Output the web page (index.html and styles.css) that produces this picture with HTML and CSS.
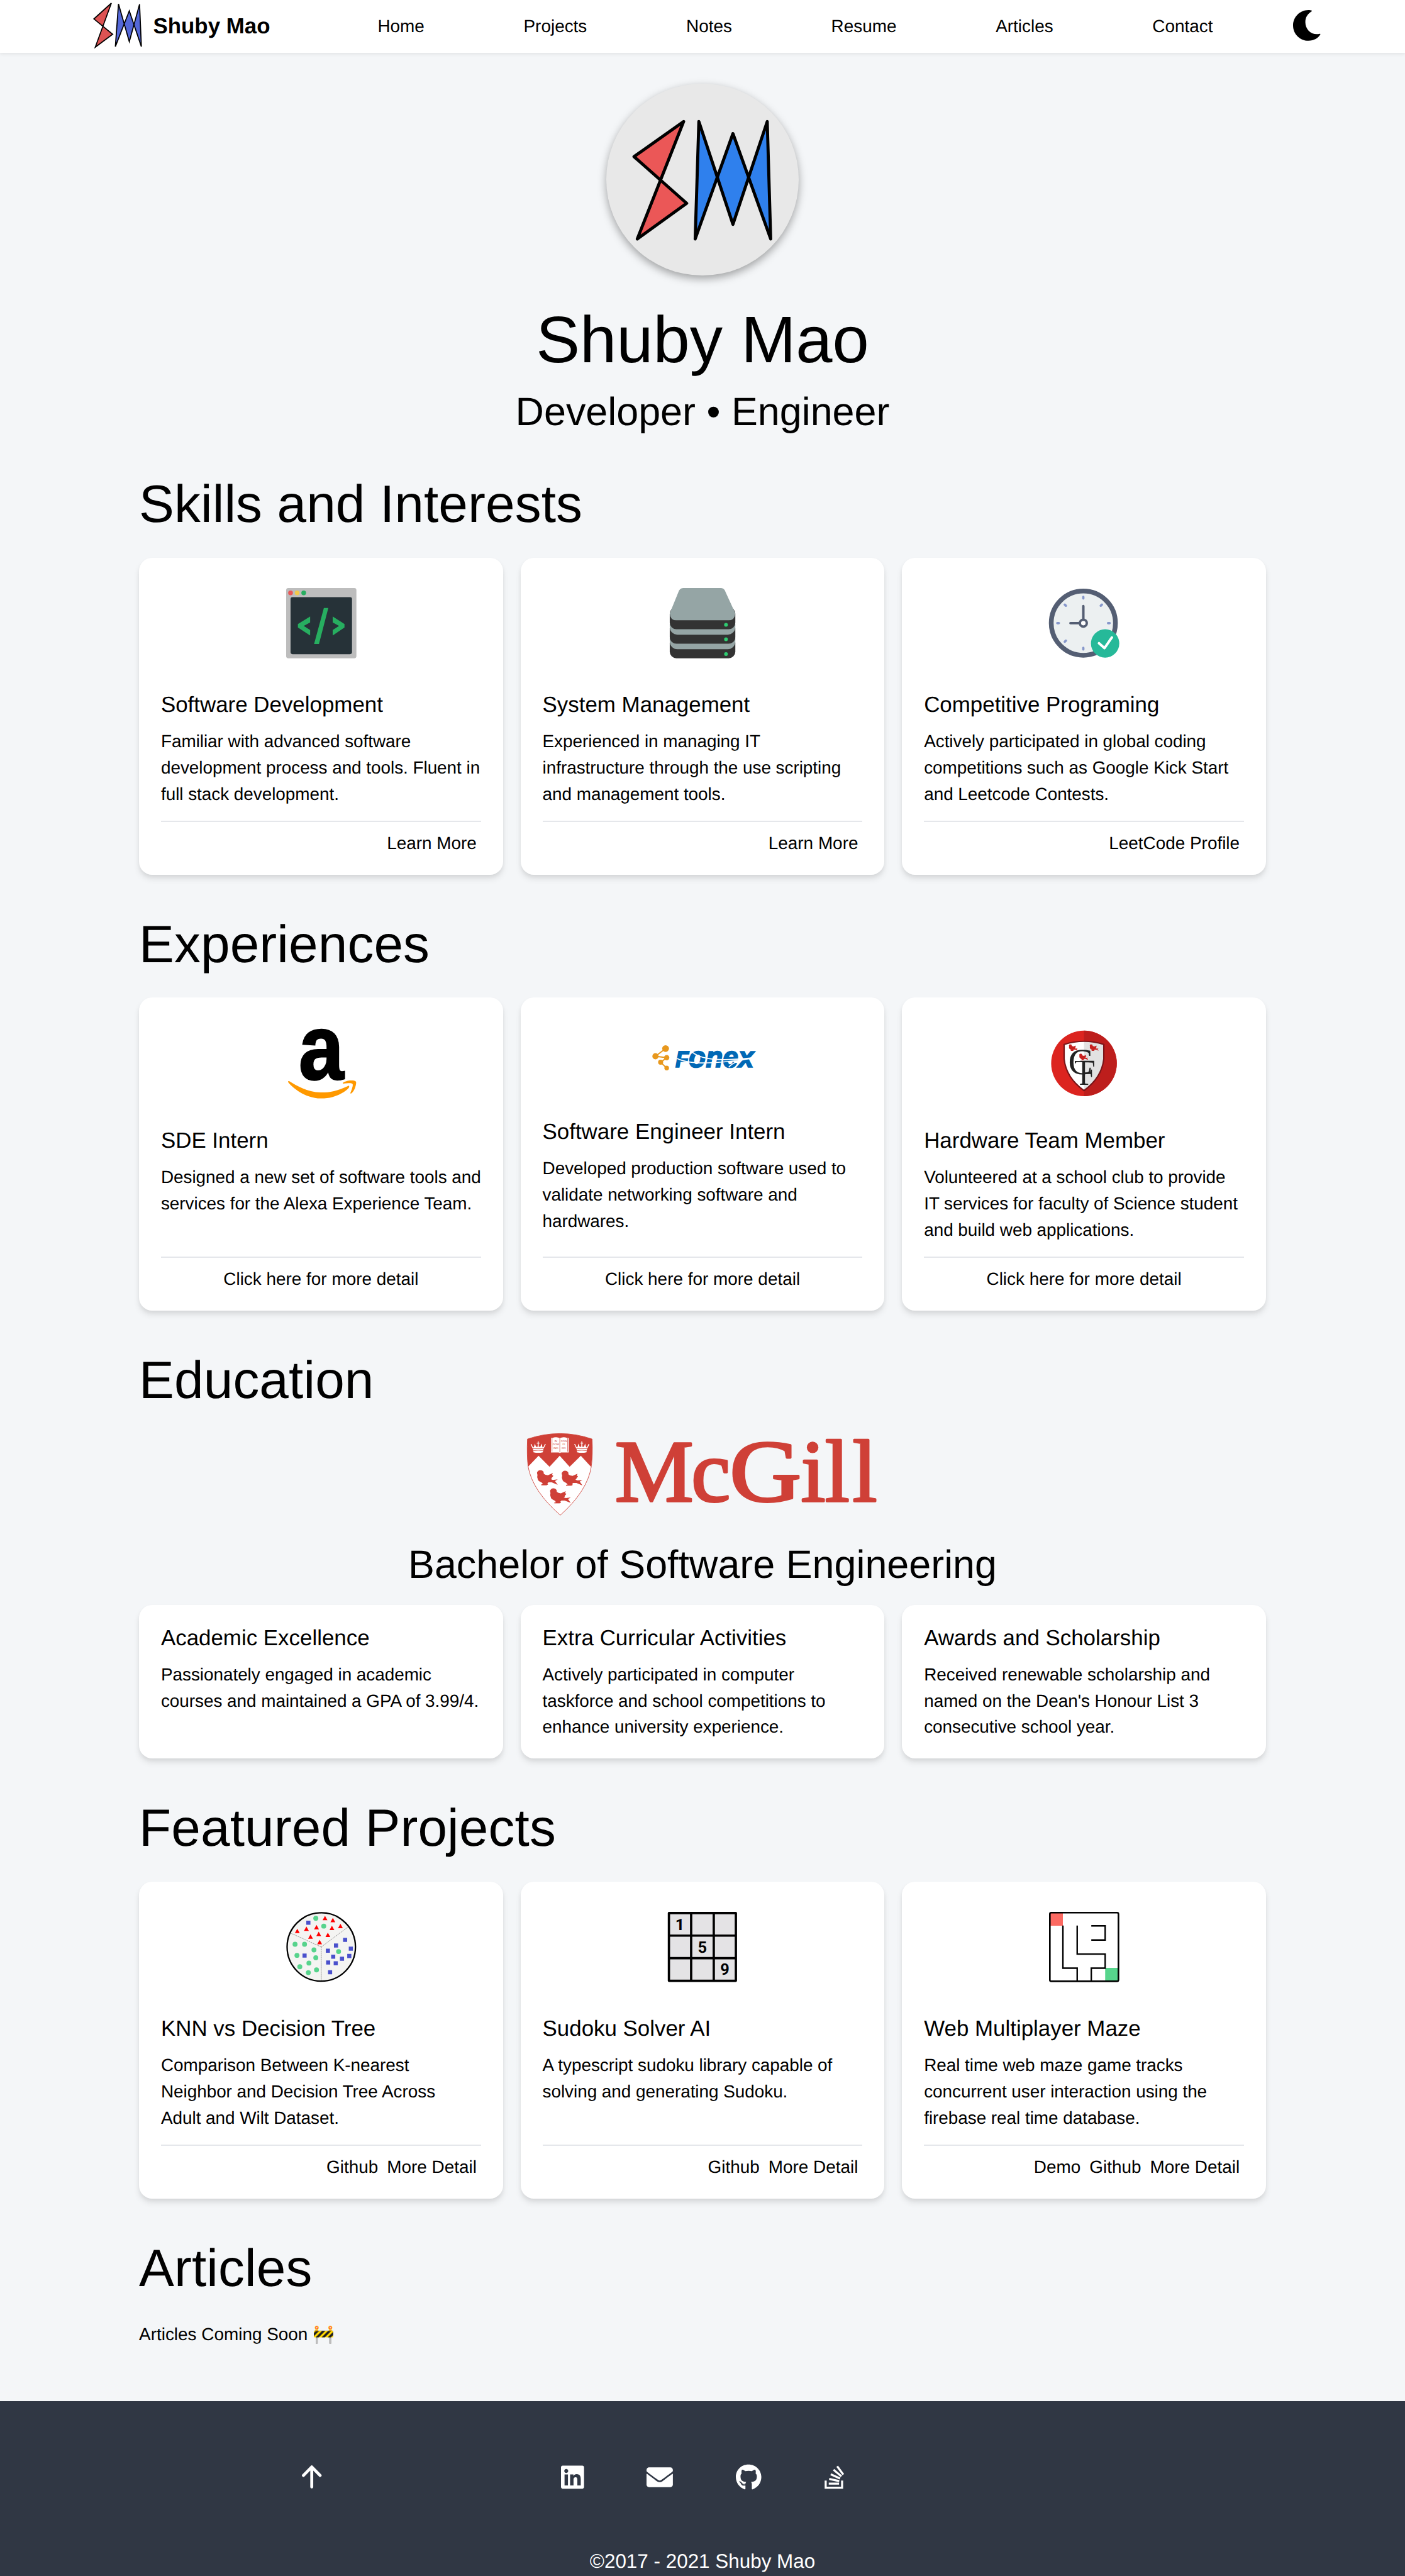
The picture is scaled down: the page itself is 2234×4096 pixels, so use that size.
FILE: index.html
```html
<!DOCTYPE html>
<html lang="en">
<head>
<meta charset="utf-8">
<title>Shuby Mao</title>
<link rel="stylesheet" href="styles.css">
</head>
<body>
<svg class="defs" aria-hidden="true">
  <symbol id="bird" viewBox="0 0 38 28"><path d="M1 3Q3 0 6 0Q10 0 12 3L12.600 7Q15 9 20 9.500L29 5.500L27.600 9L30 10.500L27 14L27 15.500L25 16.500L29 18L38 17L33 20L38 27L27 22.500L21 22.500L19 24.500L20.500 26L17.500 27.700H8L8 26L11 25.500L9 23Q3 20 2 18L0.500 13L1 9L0 5Z"/></symbol>
  <symbol id="crown" viewBox="0 0 28 21"><path d="M0 5L2 5L4 10L6 11L8 4L10 10L13 10L13.200 4L11.500 4V2.500H13.200V0H14.800V2.500H16.500V4H14.800L15 10L18 10L20 4L22 11L24 10L26 5L28 5L24 13H4Z"/><path d="M4.500 14H23.500L22.500 20Q14 22 5.500 20Z"/><path class="crown-line" d="M5 17Q14 15.500 23 17"/></symbol>
</svg>

<header class="navbar">
  <a class="brand">
    <svg class="brand-mark" viewBox="0 0 90 84"><path class="mark-red" d="M33.300 2.300L1.500 31L35.700 59L4 82.500Z"/><path class="mark-blue" d="M46.300 3.700L66 72.600L84.700 4.300L88 81.500L66 16.300L40.600 81.500Z"/></svg>
    <span>Shuby Mao</span>
  </a>
  <nav class="nav-links"><a>Home</a><a>Projects</a><a>Notes</a><a>Resume</a><a>Articles</a><a>Contact</a></nav>
  <svg class="moon" viewBox="0 0 50 56"><path d="M34 .8C33 .3 30 0 28 0C12.500 0 0 12.500 0 28S12.500 56 28 56C38 56 46 51 49.700 44.500C50.300 43.300 49 43 47.500 43.500C34 46 22.400 36 22.400 22C22.400 13 27 7 33 3C34.200 2.200 34.800 1.300 34 .8Z"/></svg>
</header>

<main>
  <section class="hero">
    <div class="avatar">
      <svg viewBox="0 0 350 350"><path class="avatar-red" d="M141 69L50.500 133L146.500 218L56.500 283Z"/><path class="avatar-blue" d="M168.700 69L230.800 256.500L293.300 69L299.600 283L230.800 91L162 283Z"/></svg>
    </div>
    <h1>Shuby Mao</h1>
    <p class="tagline">Developer • Engineer</p>
  </section>

  <section class="section">
    <h2>Skills and Interests</h2>
    <div class="cards cards-skills">
      <article class="card">
        <svg class="icon" viewBox="0 0 128 128"><rect width="128" height="128" rx="4" fill="#bdbdbd"/><circle cx="8" cy="9" r="4.300" fill="#eb5757"/><circle cx="20" cy="9" r="4.300" fill="#f2c94c"/><circle cx="32" cy="9" r="4.300" fill="#27ae60"/><rect x="8" y="16.500" width="112" height="104" rx="3.500" fill="#263238"/><path fill="#27ae60" d="M43.700 52L21.400 65.700V72L43.700 86.500V76.600L32 69L43.700 62.700ZM84.800 52L106.300 65.700V72L84.800 86.500V76.600L96.400 69L84.800 62.700ZM68.700 36.500H76.800L59.800 102H50.900Z"/></svg>
        <h3>Software Development</h3>
        <p>Familiar with advanced software<br>development process and tools. Fluent in<br>full stack development.</p>
        <div class="links"><a>Learn More</a></div>
      </article>
      <article class="card">
        <svg class="icon" viewBox="0 0 128 128"><g fill="#333"><rect x="4.500" y="88" width="119.500" height="40" rx="12"/></g><rect x="4.500" y="78" width="119.500" height="33.400" rx="14" fill="#95a5a5"/><rect x="4.500" y="62" width="119.500" height="39.500" rx="12" fill="#333"/><rect x="4.500" y="52" width="119.500" height="33" rx="14" fill="#95a5a5"/><rect x="4.500" y="35" width="119.500" height="40" rx="12" fill="#333"/><path fill="#95a5a5" d="M29 0H98Q104 0 106.500 8L124 46Q123 58.700 112 58.700H16Q5.500 58.700 4.500 46L20 8Q22.500 0 29 0Z"/><g fill="#2ecc71"><circle cx="107" cy="67" r="3.400"/><circle cx="107" cy="93.500" r="3.400"/><circle cx="107" cy="120.300" r="3.400"/></g></svg>
        <h3>System Management</h3>
        <p>Experienced in managing IT<br>infrastructure through the use scripting<br>and management tools.</p>
        <div class="links"><a>Learn More</a></div>
      </article>
      <article class="card">
        <svg class="icon" viewBox="0 0 128 128"><circle cx="62.500" cy="64" r="58.500" fill="#ecf0f1" stroke="#545e73" stroke-width="8.600"/><path d="M62.500 16V19M62.500 109V112M15 64H18M107.500 64H110.500M28.700 30.200L30.700 32.200M96.300 30.200L94.300 32.200M28.700 97.800L30.700 95.800" stroke="#8697cb" stroke-width="4.200" stroke-linecap="round"/><path d="M62.500 33V56M39 64H55" stroke="#545e73" stroke-width="4.500" stroke-linecap="round"/><circle cx="62.500" cy="64" r="6.300" fill="#fff" stroke="#545e73" stroke-width="4.400"/><circle cx="102.200" cy="101" r="25.800" fill="#26b999"/><path d="M91 100.500L101 109.500L114.500 90" fill="none" stroke="#fff" stroke-width="4.500" stroke-linecap="round" stroke-linejoin="round"/></svg>
        <h3>Competitive Programing</h3>
        <p>Actively participated in global coding<br>competitions such as Google Kick Start<br>and Leetcode Contests.</p>
        <div class="links"><a>LeetCode Profile</a></div>
      </article>
    </div>
  </section>

  <section class="section">
    <h2>Experiences</h2>
    <div class="cards cards-jobs">
      <article class="card">
        <svg class="icon" viewBox="0 0 128 128"><text class="amazon-a" transform="translate(23 92.500) scale(.88 1)">a</text><path fill="#f90" transform="translate(1.500 -9.300) scale(.2858)" d="M393.200 413c-7.700 10-70 67-174.500 67S34.200 408.500 9.700 379c-6.800-7.700 1-11.300 5.500-8.300C88.500 415.200 203 488.500 387.700 401c7.500-3.700 13.300 2 5.500 12zm39.800 2.200c-6.500 15.800-16 26.800-21.200 31-5.500 4.500-9.500 2.700-6.500-3.800s19.300-46.500 12.700-55c-6.500-8.300-37-4.300-48-3.200-10.800 1-13 2-14-.3-2.300-5.700 21.700-15.500 37.500-17.500 15.700-1.800 41-.8 46 5.700 3.700 5.100 0 27.100-6.500 43.100z"/></svg>
        <h3>SDE Intern</h3>
        <p>Designed a new set of software tools and<br>services for the Alexa Experience Team.</p>
        <div class="links links-center"><a>Click here for more detail</a></div>
      </article>
      <article class="card">
        <svg class="icon icon-wide" viewBox="0 0 192 112"><g fill="#e8981d"><circle cx="29" cy="37" r="6.200"/><circle cx="10.500" cy="51" r="5.600"/><circle cx="31" cy="53.600" r="4.800"/><circle cx="20" cy="62" r="4.600"/><circle cx="31" cy="72.500" r="4.200"/></g><path d="M29 37L10.500 51L31 53.600L20 62L31 72.500" fill="none" stroke="#e8981d" stroke-width="2.300"/><text class="fonex" x="47" y="70.500" textLength="143" lengthAdjust="spacingAndGlyphs"><tspan class="fonex-f">F</tspan>onex</text><path d="M50 55C72 66 110 66 186 55M76 42C92 58 130 60 186 54M144 71C152 62 164 58 184 55" fill="none" stroke="#fff" stroke-width="1.900"/></svg>
        <h3>Software Engineer Intern</h3>
        <p>Developed production software used to<br>validate networking software and<br>hardwares.</p>
        <div class="links links-center"><a>Click here for more detail</a></div>
      </article>
      <article class="card">
        <svg class="icon" viewBox="0 0 128 128"><circle cx="63.700" cy="64" r="59.800" fill="#dc241f"/><path d="M63.700 4.200A59.800 59.800 0 0 1 63.700 123.800Z" fill="#bd1e1c"/><path d="M27.500 29.500Q63.700 18 99.800 29.500V56Q96 90 63.700 113.500Q31 90 27.500 56Z" fill="#fff"/><path d="M63.700 24V113.500Q96 90 99.800 56V29.500Q84 24 63.700 24Z" fill="#e2e2e2"/><path d="M27.500 29.500Q63.700 18 99.800 29.500V56Q96 90 63.700 113.500Q31 90 27.500 56Z" fill="none" stroke="#7a1518" stroke-width="2.500"/><g class="crest-text"><text transform="translate(35 84)">C</text><text transform="translate(54.500 103.700) scale(.8 1)">F</text></g><path d="M47 59.700H60V61.500H50L47 65Z" fill="#222"/><g fill="#c8201e"><use href="#bird" x="36" y="29" width="16.500" height="12.500"/><use href="#bird" x="74" y="29" width="16.500" height="12.500"/><use href="#bird" x="55" y="46" width="16.500" height="12.500"/></g></svg>
        <h3>Hardware Team Member</h3>
        <p>Volunteered at a school club to provide<br>IT services for faculty of Science student<br>and build web applications.</p>
        <div class="links links-center"><a>Click here for more detail</a></div>
      </article>
    </div>
  </section>

  <section class="section">
    <h2>Education</h2>
    <svg class="school" viewBox="0 0 640 150">
      <path d="M.8 10.500Q30 .5 60 .5T118.500 10.500Q120 40 117 61Q110 105 60.600 149.300Q10 105 2 61Q-.5 40 .8 10.500Z" fill="#fff" stroke="#cf4037"/>
      <path d="M.8 10.500Q30 .5 60 .5T118.500 10.500Q120 40 116.500 61L98 41L77.600 61L59.500 41L41 61L21 41L1.800 61Q-.5 40 .8 10.500Z" fill="#cf4037"/>
      <g fill="#cf4037"><use href="#bird" x="18" y="67" width="38" height="28"/><use href="#bird" x="63" y="68" width="38" height="28"/><use href="#bird" x="41.700" y="100" width="38" height="28"/></g>
      <g fill="#fff"><use href="#crown" x="6.300" y="14.700" width="28" height="21"/><use href="#crown" x="85.800" y="14.700" width="28" height="21"/><path d="M43.600 8.500H46Q54 5.500 59.700 9Q66 5.500 73 8.500H76V35H62L59.700 36L57.500 35H43.600Z"/></g>
      <path d="M45.500 9V33.500M74 9V33.500M59.700 9V35" stroke="#cf4037" stroke-width=".8"/>
      <g class="motto"><text x="52.500" y="15.500">IN</text><text x="52.500" y="22">DOM</text><text x="52.500" y="28.500">INO</text><text x="67" y="15.500">CON</text><text x="67" y="22">FI</text><text x="67" y="28.500">DO</text></g>
      <text class="school-name" y="124"><tspan x="160 299">Mc</tspan><tspan x="369" textLength="131" lengthAdjust="spacingAndGlyphs">G</tspan><tspan x="499 543 593">ill</tspan></text>
    </svg>
    <p class="degree">Bachelor of Software Engineering</p>
    <div class="cards cards-plain">
      <article class="card">
        <h3>Academic Excellence</h3>
        <p>Passionately engaged in academic<br>courses and maintained a GPA of 3.99/4.</p>
      </article>
      <article class="card">
        <h3>Extra Curricular Activities</h3>
        <p>Actively participated in computer<br>taskforce and school competitions to<br>enhance university experience.</p>
      </article>
      <article class="card">
        <h3>Awards and Scholarship</h3>
        <p>Received renewable scholarship and<br>named on the Dean's Honour List 3<br>consecutive school year.</p>
      </article>
    </div>
  </section>

  <section class="section">
    <h2>Featured Projects</h2>
    <div class="cards cards-skills">
      <article class="card">
        <svg class="icon" viewBox="0 0 128 128"><circle cx="64" cy="64" r="62.300" fill="#f4f4f2" stroke="#000" stroke-width="2.600"/><path d="M64 64V125M64 64L9 39M64 64L112 28" stroke="#666" stroke-width=".8" stroke-dasharray="2.500 1.200"/>
          <g fill="#57d38c"><circle cx="54" cy="11.700" r="4.500"/><circle cx="68.500" cy="26" r="4.500"/><circle cx="16.200" cy="59" r="4.500"/><circle cx="33.500" cy="59" r="4.500"/><circle cx="50.700" cy="69.300" r="4.500"/><circle cx="19.700" cy="79.300" r="4.500"/><circle cx="54" cy="83.700" r="4.500"/><circle cx="41.500" cy="93.300" r="4.500"/><circle cx="24.900" cy="100" r="4.500"/><circle cx="55.300" cy="105.700" r="4.500"/><circle cx="40.400" cy="110.700" r="4.500"/><circle cx="95.500" cy="72.300" r="4.500"/></g>
          <path fill="#4a50cc" d="M36.700 16h7.500v7.500h-7.500zM103.700 47.300h7.500v7.500h-7.500zM87.100 57.600h7.500v7.500h-7.500zM72.300 67h7.500v7.500h-7.500zM114.100 63.300h7.500v7.500h-7.500zM111.300 76.600h7.500v7.500h-7.500zM82 78h7.500v7.500h-7.500zM98 81.600h7.500v7.500h-7.500zM72.800 88.600h7.500v7.500h-7.500zM86.600 90h7.500v7.500h-7.500zM76.300 106.300h7.500v7.500h-7.500zM29.800 76h7.500v7.500h-7.500z"/>
          <path fill="#f00" d="M70.800 7.300l4.400 8h-8.800zM85.100 11l4.400 8h-8.800zM98.900 21.700l4.400 8h-8.800zM83.400 25.300l4.400 8h-8.800zM55.300 23.700l4.400 8h-8.800zM36.900 26.700l4.400 8h-8.800zM20.300 30.700l4.400 8h-8.800zM59.300 36l4.400 8h-8.800zM76 37.700l4.400 8h-8.800zM44.400 41l4.400 8h-8.800zM61 51l4.400 8h-8.800z"/></svg>
        <h3>KNN vs Decision Tree</h3>
        <p>Comparison Between K-nearest<br>Neighbor and Decision Tree Across<br>Adult and Wilt Dataset.</p>
        <div class="links"><a>Github</a><a>More Detail</a></div>
      </article>
      <article class="card">
        <svg class="icon" viewBox="0 0 128 128"><path d="M3 2.200H125V125.600H3ZM43.500 2V126M84.700 2V126M3 43.300H125M3 84.300H125" fill="#e4e3e5" stroke="#000" stroke-width="4.200" stroke-linejoin="round"/><g class="digits"><text x="23" y="33">1</text><text x="64" y="74">5</text><text x="105" y="115">9</text></g></svg>
        <h3>Sudoku Solver AI</h3>
        <p>A typescript sudoku library capable of<br>solving and generating Sudoku.</p>
        <div class="links"><a>Github</a><a>More Detail</a></div>
      </article>
      <article class="card">
        <svg class="icon" viewBox="0 0 128 128"><path d="M2 2H25.200V25.200H2Z" fill="#fc6a62"/><path d="M102.300 102H126V126H102.300Z" fill="#57d58c"/><rect x="1.500" y="1.500" width="125" height="125" rx="2.500" fill="none" stroke="#000" stroke-width="3"/><path d="M25.300 25V102.600H51.300V126M51.300 25V77H102.300V102.600H77V126M77 25.500H102.300V51.300H77" fill="none" stroke="#000" stroke-width="2.700"/></svg>
        <h3>Web Multiplayer Maze</h3>
        <p>Real time web maze game tracks<br>concurrent user interaction using the<br>firebase real time database.</p>
        <div class="links"><a>Demo</a><a>Github</a><a>More Detail</a></div>
      </article>
    </div>
  </section>

  <section class="section">
    <h2>Articles</h2>
    <p class="soon">Articles Coming Soon 🚧</p>
  </section>
</main>

<footer class="footer">
  <div class="footer-icons">
    <svg class="up" viewBox="0 0 36 42"><path d="M18 3V39.500M2.800 18.500L18 3L33.200 18.500" fill="none" stroke="#fff" stroke-width="5.400" stroke-linecap="round" stroke-linejoin="round"/></svg>
    <div class="social">
      <svg class="s-linkedin" viewBox="0 0 448 512"><path d="M416 32H31.900C14.300 32 0 46.500 0 64.300v383.400C0 465.500 14.300 480 31.900 480H416c17.600 0 32-14.500 32-32.300V64.300c0-17.800-14.400-32.300-32-32.300zM135.400 416H69V202.200h66.500V416zm-33.200-243c-21.300 0-38.500-17.300-38.500-38.500S80.900 96 102.200 96c21.200 0 38.500 17.300 38.500 38.500 0 21.300-17.200 38.500-38.500 38.500zm282.100 243h-66.400V312c0-24.800-.5-56.700-34.500-56.700-34.600 0-39.900 27-39.900 54.900V416h-66.400V202.200h63.700v29.200h.9c8.900-16.800 30.600-34.500 62.900-34.500 67.200 0 79.700 44.300 79.700 101.900V416z"/></svg>
      <svg class="s-mail" viewBox="0 0 512 512"><path d="M502.300 190.800c3.900-3.100 9.700-.2 9.700 4.700V400c0 26.500-21.500 48-48 48H48c-26.500 0-48-21.500-48-48V195.600c0-5 5.700-7.800 9.700-4.700 22.400 17.400 52.100 39.500 154.100 113.600 21.100 15.400 56.700 47.800 92.200 47.600 35.700.3 72-32.800 92.300-47.600 102-74.100 131.600-96.300 154-113.700zM256 320c23.200.4 56.600-29.200 73.400-41.400 132.700-96.300 142.800-104.700 173.400-128.700 5.800-4.500 9.200-11.500 9.200-18.900v-19c0-26.500-21.500-48-48-48H48c-26.500 0-48 21.500-48 48v19c0 7.400 3.400 14.300 9.200 18.900 30.600 23.900 40.700 32.400 173.400 128.700 16.800 12.200 50.200 41.800 73.400 41.400z"/></svg>
      <svg class="s-github" viewBox="0 0 496 512"><path d="M165.900 397.400c0 2-2.300 3.600-5.200 3.600-3.300.3-5.600-1.300-5.600-3.600 0-2 2.300-3.600 5.200-3.600 3-.3 5.600 1.300 5.600 3.600zm-31.100-4.500c-.7 2 1.300 4.300 4.300 4.900 2.600 1 5.600 0 6.200-2s-1.300-4.300-4.300-5.200c-2.600-.7-5.500.3-6.200 2.300zm44.200-1.700c-2.900.7-4.900 2.600-4.600 4.900.3 2 2.900 3.300 5.900 2.600 2.900-.7 4.900-2.600 4.600-4.600-.3-1.900-3-3.200-5.900-2.900zM244.800 8C106.100 8 0 113.300 0 252c0 110.900 69.800 205.800 169.500 239.200 12.800 2.300 17.300-5.600 17.300-12.100 0-6.200-.3-40.400-.3-61.400 0 0-70 15-84.700-29.800 0 0-11.400-29.100-27.800-36.600 0 0-22.900-15.700 1.600-15.400 0 0 24.900 2 38.600 25.800 21.900 38.600 58.600 27.500 72.900 20.900 2.300-16 8.800-27.100 16-33.700-55.900-6.200-112.300-14.300-112.300-110.500 0-27.500 7.600-41.300 23.600-58.900-2.600-6.500-11.100-33.300 2.600-67.900 20.900-6.500 69 27 69 27 20-5.600 41.500-8.500 62.800-8.500s42.800 2.900 62.800 8.500c0 0 48.100-33.600 69-27 13.700 34.700 5.200 61.400 2.600 67.900 16 17.700 25.800 31.500 25.800 58.900 0 96.500-58.900 104.200-114.800 110.500 9.200 7.900 17 22.900 17 46.400 0 33.700-.3 75.400-.3 83.600 0 6.500 4.600 14.400 17.300 12.100C428.200 457.800 496 362.900 496 252 496 113.300 383.500 8 244.800 8z"/></svg>
      <svg class="s-stack" viewBox="0 0 384 512"><path d="M290.700 311L95 269.700 86.800 309l195.700 41zm51-87L188.200 95.700l-25.500 30.800 153.500 128.300zm-31.200 39.700L129.200 179l-16.700 36.500L293.700 300zM262 32l-32 24 119.300 160.300 32-24zm20.500 328h-200v39.700h200zm39.700 80H42.700V320h-40v160h359.500V320h-40z"/></svg>
    </div>
  </div>
  <p class="copyright">©2017 - 2021 Shuby Mao</p>
</footer>
</body>
</html>
```
FILE: styles.css
```css
html {
  font-size: 8.7265625px;
}

* {
  box-sizing: border-box;
  margin: 0;
  padding: 0;
}

body {
  background: #f4f6f8;
  color: #000;
  font-family: "Liberation Sans", Arial, sans-serif;
  font-size: 3.2rem;
  line-height: 4.8rem;
  text-rendering: geometricPrecision;
  height: 4096px;
  overflow: hidden;
}

svg {
  display: block;
  flex: none;
  overflow: visible;
}

.defs {
  display: none;
}

.crown-line {
  fill: none;
  stroke: #cf4037;
  stroke-width: .8;
}

/* Navigation */
.navbar {
  display: flex;
  align-items: center;
  height: 9.6rem;
  padding-left: 17rem;
  background: #fff;
  box-shadow: 0 .2rem .6rem rgba(0, 0, 0, .08);
}

.brand {
  display: flex;
  align-items: center;
  gap: 1.9rem;
  width: 51.8rem;
  font-size: 4rem;
  font-weight: 700;
  line-height: 6rem;
  white-space: nowrap;
}

.brand-mark {
  width: 9rem;
  height: 8.4rem;
  margin-bottom: .6rem;
}

.mark-red,
.mark-blue {
  fill: #dd5353;
  stroke: #000;
  stroke-width: 2;
}

.mark-blue {
  fill: #5468d9;
}

.nav-links {
  display: flex;
  justify-content: space-between;
  width: 152.2rem;
  padding-bottom: .1rem;
}

.moon {
  width: 5rem;
  height: 5.6rem;
  margin-left: 14.6rem;
  margin-bottom: .4rem;
}

/* Hero */
.hero {
  display: flex;
  flex-direction: column;
  align-items: center;
  height: 69.6rem;
  padding-top: 5.6rem;
}

.avatar {
  width: 35rem;
  height: 35rem;
  border-radius: 50%;
  background: #e8e8e8;
  box-shadow: 0 .6rem 1.6rem rgba(0, 0, 0, .35);
}

.avatar-red,
.avatar-blue {
  fill: #eb5757;
  stroke: #000;
  stroke-width: 5.6;
  stroke-linejoin: round;
}

.avatar-blue {
  fill: #2f80ed;
}

h1,
h2,
h3 {
  font-weight: 400;
}

h1 {
  margin-top: 5.8rem;
  font-size: 12rem;
  line-height: 12rem;
}

.tagline {
  margin-top: 3.56rem;
  font-size: 7.2rem;
  line-height: 7.2rem;
}

/* Sections */
.section {
  padding: 7.87rem 25.33rem 0;
}

h2 {
  margin-bottom: 4.93rem;
  font-size: 9.6rem;
  line-height: 9.6rem;
  letter-spacing: .1px;
}

.cards {
  display: grid;
  grid-template-columns: repeat(3, 1fr);
  gap: 3.2rem;
}

.cards-skills {
  grid-template-rows: 57.8rem;
}

.cards-jobs {
  grid-template-rows: 57rem;
}

.cards-plain {
  grid-template-rows: 28rem;
}

.card {
  display: flex;
  flex-direction: column;
  padding: 5.6rem 4rem 3.3rem;
  border-radius: 2.4rem;
  background: #fff;
  box-shadow: 0 .8rem 1.2rem -.2rem rgba(0, 0, 0, .1), 0 .4rem .8rem -.2rem rgba(0, 0, 0, .06);
  white-space: nowrap;
}

.card p {
  letter-spacing: -.04px;
}

.icon {
  width: 12.8rem;
  height: 12.8rem;
  margin: 0 auto 5.5rem;
}

.cards-jobs .icon {
  margin-bottom: 4.7rem;
}

.cards-jobs .icon-wide {
  width: 19.2rem;
  height: 11.2rem;
}

.cards-plain .card {
  padding-top: 3.1rem;
}

h3 {
  margin-bottom: 1.2rem;
  font-size: 4rem;
  line-height: 6rem;
}

.links {
  display: flex;
  justify-content: flex-end;
  gap: 1.6rem;
  margin-top: auto;
  padding: 1.5rem .8rem 0;
  border-top: 2px solid #e5e7eb;
}

.links-center {
  justify-content: center;
}

/* Logo lettering */
.amazon-a {
  font-size: 168px;
  font-weight: 700;
  stroke: #000;
  stroke-width: 3;
}

.fonex {
  fill: #0068b5;
  stroke: #0068b5;
  stroke-width: 2;
  font-size: 54px;
  font-weight: 700;
  font-style: italic;
}

.fonex-f {
  font-size: 42px;
}

.crest-text {
  fill: #222;
  font-family: "Liberation Serif", serif;
  font-size: 67px;
}

.digits {
  font-family: Roboto, sans-serif;
  font-size: 29px;
  font-weight: 700;
  text-anchor: middle;
}

/* Education */
.school {
  width: 64rem;
  height: 15rem;
  margin: 0 auto;
}

.school-name {
  fill: #cf4037;
  stroke: #cf4037;
  stroke-width: 4;
  stroke-linejoin: round;
  font-family: "Liberation Serif", serif;
  font-size: 161px;
}

.motto {
  fill: #cf4037;
  font-size: 5px;
  text-anchor: middle;
}

.degree {
  margin: 5.4rem 0 3.62rem;
  font-size: 7.2rem;
  line-height: 7.2rem;
  text-align: center;
}

/* Footer */
.footer {
  height: 32rem;
  margin-top: 9.75rem;
  padding-top: 11.4rem;
  background: #303744;
  color: #fff;
}

.footer-icons {
  display: flex;
  align-items: center;
  height: 4.8rem;
  padding-left: 55rem;
}

.up {
  width: 3.6rem;
  height: 4.2rem;
}

.social {
  display: flex;
  gap: 11.45rem;
  margin-left: 43.6rem;
}

.social svg {
  height: 4.8rem;
  fill: #fff;
}

.s-linkedin {
  width: 4.2rem;
}

.s-mail {
  width: 4.8rem;
}

.s-github {
  width: 4.65rem;
}

.s-stack {
  width: 3.6rem;
}

.copyright {
  margin-top: 11.1rem;
  font-size: 3.6rem;
  line-height: 3.6rem;
  text-align: center;
}
```
